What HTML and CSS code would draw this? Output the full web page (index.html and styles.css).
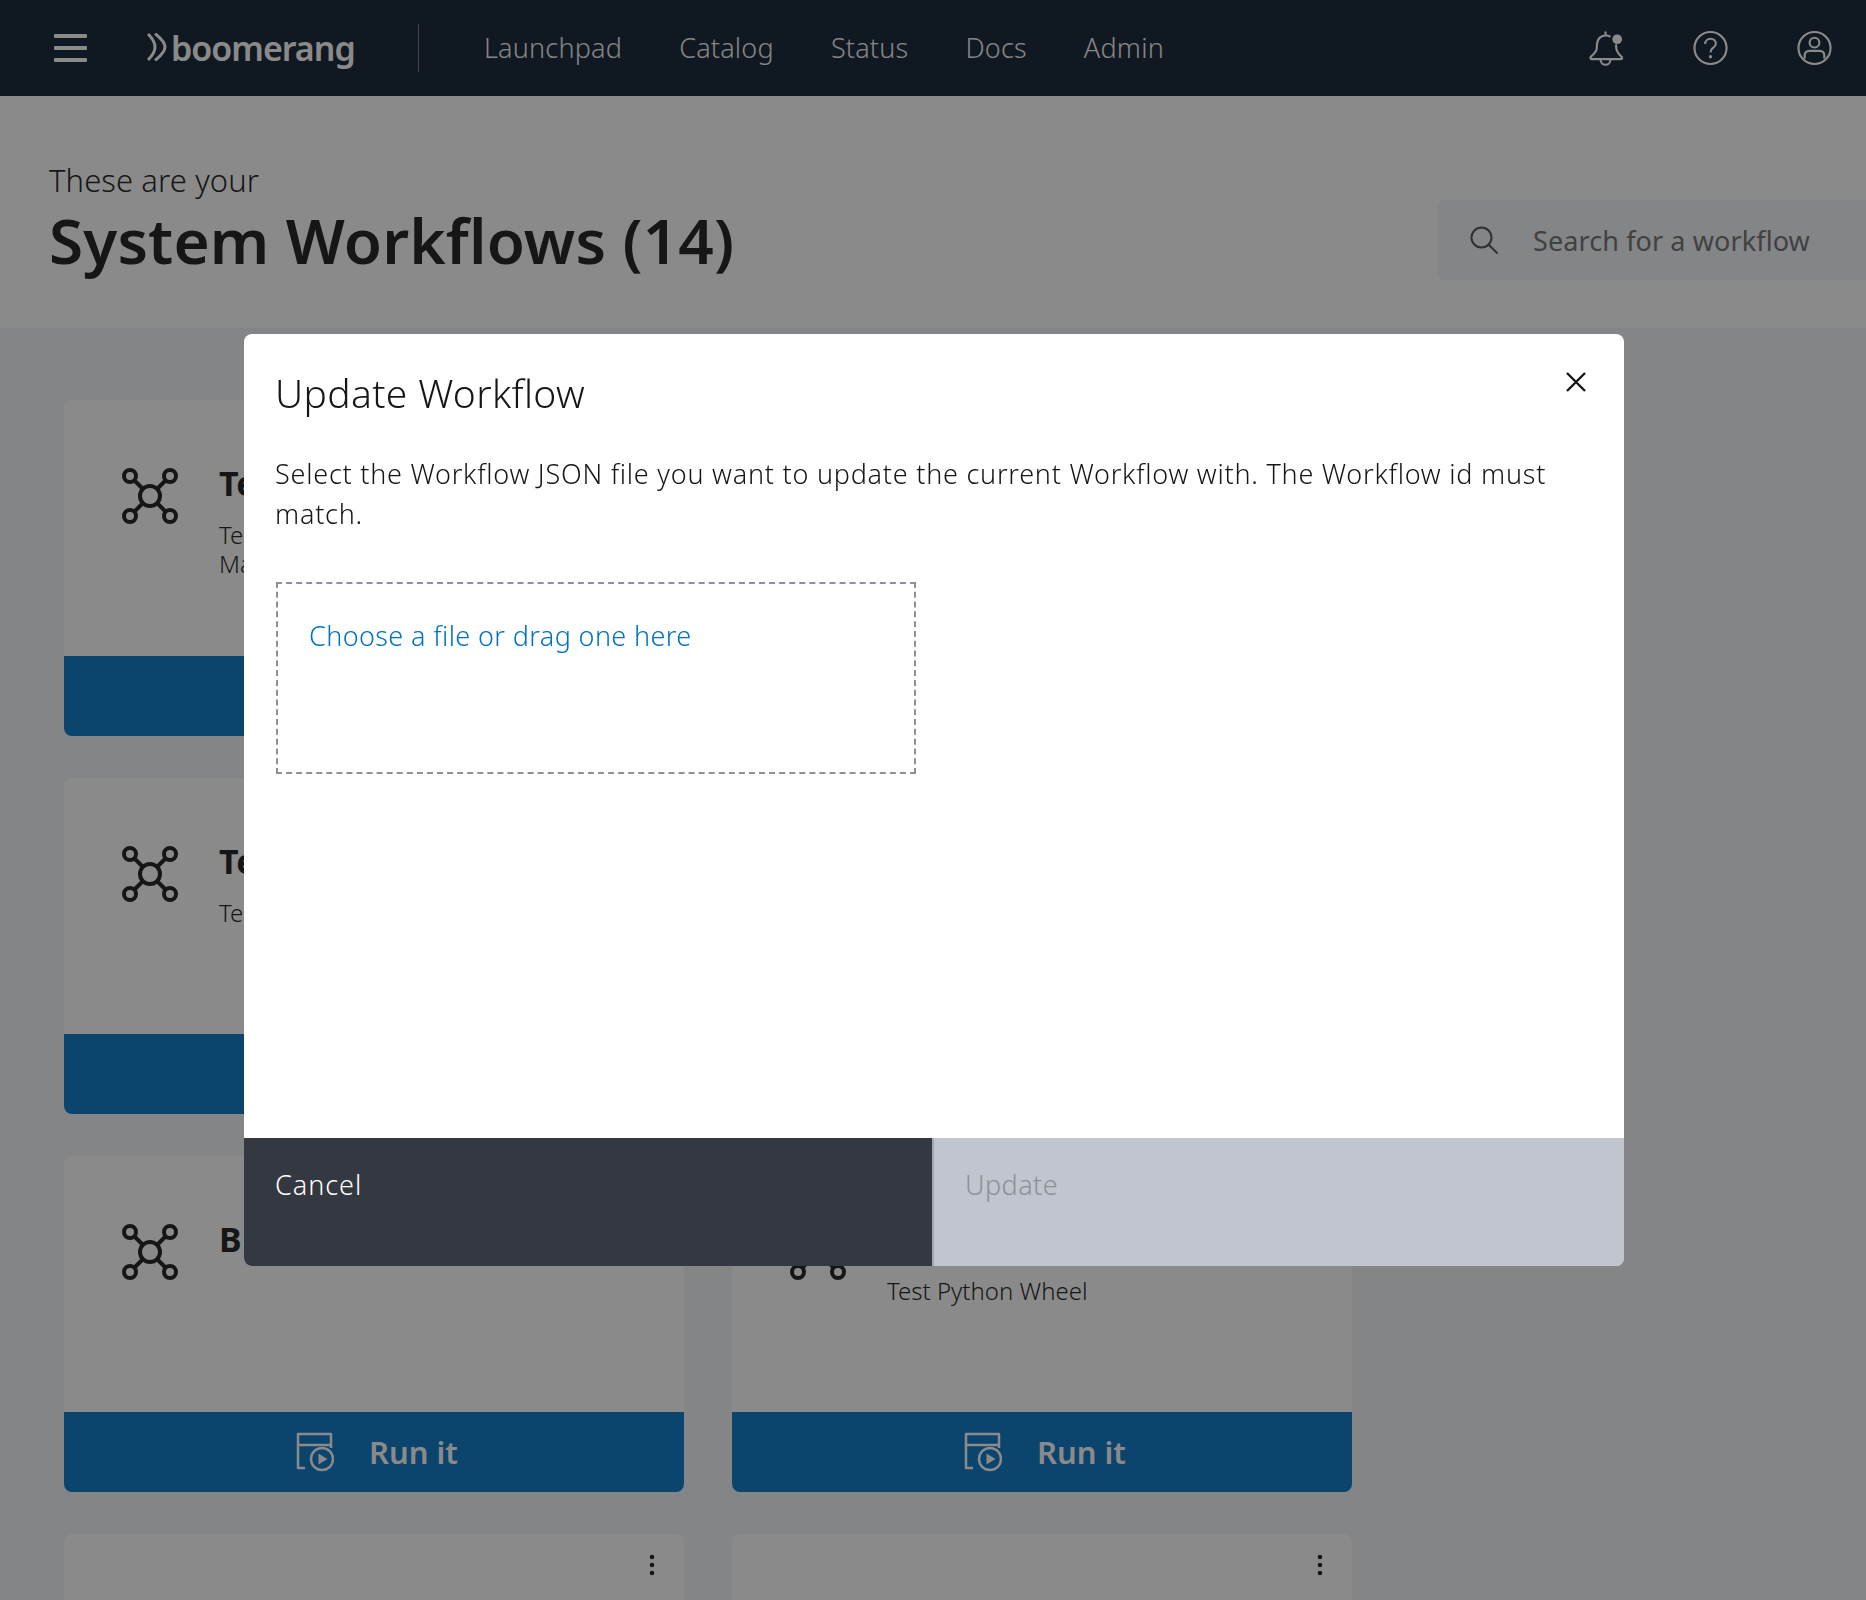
FILE: index.html
```html
<!DOCTYPE html>
<html lang="en">
<head>
<meta charset="utf-8">
<title>System Workflows</title>
<link rel="stylesheet" href="styles.css">
</head>
<body>
<svg class="defs" width="0" height="0" aria-hidden="true">
  <symbol id="wf" viewBox="0 0 56 56">
    <g fill="none" stroke="currentColor" stroke-width="4">
      <circle cx="28" cy="28" r="10"/>
      <circle cx="8" cy="8" r="6"/><circle cx="48" cy="8" r="6"/>
      <circle cx="8" cy="48" r="6"/><circle cx="48" cy="48" r="6"/>
      <path d="M12.5 12.5l8.5 8.5M43.500 12.500l-8.500 8.500M12.500 43.500l8.500-8.500M43.500 43.500l-8.500-8.500"/>
    </g>
  </symbol>
  <symbol id="run" viewBox="0 0 38 40">
    <g fill="none" stroke="currentColor" stroke-width="2.500" stroke-linejoin="round">
      <path d="M9 36H2V2h33v11H2"/>
      <path d="M35 13v3"/>
      <circle cx="26" cy="27" r="11"/>
    </g>
    <path d="M22.500 21.500l9 5.500-9 5.500z" fill="currentColor"/>
  </symbol>
  <symbol id="kebab" viewBox="0 0 6 22">
    <circle cx="3" cy="3" r="2.300" fill="currentColor"/><circle cx="3" cy="11" r="2.300" fill="currentColor"/><circle cx="3" cy="19" r="2.300" fill="currentColor"/>
  </symbol>
</svg>

<div class="page">
<header class="topbar">
  <button class="menu" aria-label="Menu"><span></span><span></span><span></span></button>
  <a class="logo">
    <svg class="logo-mark" viewBox="0 0 20 28"><g fill="none" stroke="currentColor" stroke-width="3"><path d="M1 1c4 4 7 8 7 13s-3 9-7 13"/><path d="M8 .5c5 4 10 8.500 10 13.500s-5 9.500-10 13.500"/></g></svg>
    <span>boomerang</span>
  </a>
  <span class="divider"></span>
  <nav class="links">
    <a>Launchpad</a><a>Catalog</a><a>Status</a><a>Docs</a><a>Admin</a>
  </nav>
  <div class="actions">
    <svg class="act bell" viewBox="0 0 36 36"><g fill="none" stroke="currentColor" stroke-width="2.200" stroke-linejoin="round"><path d="M17 1v4"/><path d="M22 6.500C20 5 14 4 10.500 8 8 11 8 14 8 18c0 4-3 6-6 9-1 1-.5 2.500 1 2.500h29.500c1.500 0 2-1.500 1-2.500-3-3-5.500-5-5.500-9.500 0-1 0-2-.5-3"/><path d="M12 30c0 7 10 7 10 0"/></g><circle cx="29" cy="9" r="5" fill="currentColor"/></svg>
    <svg class="act" viewBox="0 0 36 36"><g fill="none" stroke="currentColor" stroke-width="2.200"><circle cx="18" cy="18" r="16.500"/><path d="M12.500 14c0-3.500 2.500-5.500 5.500-5.500s5.500 2 5.500 5c0 2-1 3-3 4.500-2 1.300-2.500 2.300-2.500 4.500"/></g><circle cx="18" cy="27" r="1.700" fill="currentColor"/></svg>
    <svg class="act" viewBox="0 0 36 36"><g fill="none" stroke="currentColor" stroke-width="2.200"><circle cx="18" cy="18" r="16.500"/><circle cx="18" cy="12.500" r="5"/><path d="M8 29c-1-7 2-8 5-8h10c3 0 6 1 5 8"/></g></svg>
  </div>
</header>

<section class="hero">
  <div class="hero-text">
    <p class="eyebrow">These are your</p>
    <h1 class="title">System Workflows (14)</h1>
  </div>
  <label class="search">
    <svg class="search-icon" viewBox="0 0 28 28"><g fill="none" stroke="currentColor" stroke-width="2"><circle cx="11.500" cy="11.500" r="10"/><path d="M18.500 18.500l9 9"/></g></svg>
    <span>Search for a workflow</span>
  </label>
</section>

<main class="grid">
  <article class="card">
    <div class="card-body">
      <svg class="wf"><use href="#wf"/></svg>
      <div class="card-text"><h2>Te</h2><p>Te<br>Ma</p></div>
      <svg class="kebab"><use href="#kebab"/></svg>
    </div>
    <button class="run"><svg class="run-icon"><use href="#run"/></svg><span>Run it</span></button>
  </article>
  <article class="card">
    <div class="card-body">
      <svg class="wf"><use href="#wf"/></svg>
      <svg class="kebab"><use href="#kebab"/></svg>
    </div>
    <button class="run"><svg class="run-icon"><use href="#run"/></svg></button>
  </article>
  <article class="card">
    <div class="card-body">
      <svg class="wf"><use href="#wf"/></svg>
      <div class="card-text"><h2>Te</h2><p>Te</p></div>
      <svg class="kebab"><use href="#kebab"/></svg>
    </div>
    <button class="run"><svg class="run-icon"><use href="#run"/></svg><span>Run it</span></button>
  </article>
  <article class="card">
    <div class="card-body">
      <svg class="wf"><use href="#wf"/></svg>
      <svg class="kebab"><use href="#kebab"/></svg>
    </div>
    <button class="run"><svg class="run-icon"><use href="#run"/></svg></button>
  </article>
  <article class="card">
    <div class="card-body">
      <svg class="wf"><use href="#wf"/></svg>
      <div class="card-text"><h2>B</h2></div>
      <svg class="kebab"><use href="#kebab"/></svg>
    </div>
    <button class="run"><svg class="run-icon"><use href="#run"/></svg><span>Run it</span></button>
  </article>
  <article class="card">
    <div class="card-body">
      <svg class="wf"><use href="#wf"/></svg>
      <div class="card-text"><h2>Python Wheel</h2><p>Test Python Wheel</p></div>
      <svg class="kebab"><use href="#kebab"/></svg>
    </div>
    <button class="run"><svg class="run-icon"><use href="#run"/></svg><span>Run it</span></button>
  </article>
  <article class="card">
    <div class="card-body"><svg class="kebab"><use href="#kebab"/></svg></div>
  </article>
  <article class="card">
    <div class="card-body"><svg class="kebab"><use href="#kebab"/></svg></div>
  </article>
</main>
</div>

<div class="overlay">
  <div class="modal" role="dialog">
    <div class="modal-main">
      <h3 class="modal-title">Update Workflow</h3>
      <button class="close" aria-label="Close"><svg viewBox="0 0 20 20"><path d="M1 1l18 18M19 1L1 19" fill="none" stroke="currentColor" stroke-width="2.400"/></svg></button>
      <p class="modal-copy">Select the Workflow JSON file you want to update the current Workflow with. The Workflow id must match.</p>
      <div class="drop"><a>Choose a file or drag one here</a></div>
    </div>
    <div class="modal-foot">
      <button class="btn cancel">Cancel</button>
      <button class="btn update" disabled>Update</button>
    </div>
  </div>
</div>
</body>
</html>
```
FILE: styles.css
```css
* { box-sizing: border-box; }
html, body { margin: 0; height: 100%; overflow: hidden; }
body { background: #f2f4f8; font-family: "Noto Sans", "Open Sans", sans-serif; color: #161616; }
.defs { position: absolute; }
button { font: inherit; border: 0; background: none; padding: 0; }
h1, h2, h3, p { margin: 0; font-weight: 400; }
.page { height: 1600px; display: flex; flex-direction: column; overflow: hidden; }

.topbar { flex: none; height: 96px; background: #0a1a2c; color: #fff; display: flex; align-items: center; }
.menu { width: 33px; margin-left: 54px; display: flex; flex-direction: column; gap: 8px; }
.menu span { display: block; height: 4px; border-radius: 1px; background: #fff; }
.logo { display: flex; align-items: center; gap: 4px; margin-left: 60px; width: 271px; font-size: 34px; font-weight: 600; letter-spacing: -1px; }
.logo-mark { flex: none; width: 20px; height: 28px; margin-top: -2px; }
.divider { flex: none; width: 1px; height: 48px; background: #6a7075; }
.links { display: flex; gap: 57px; margin: -2px 0 0 65px; font-size: 27px; letter-spacing: .2px; color: #f4f4f4; font-weight: 300; }
.actions { margin-left: auto; display: flex; gap: 69px; margin-right: 34px; }
.act { width: 35px; height: 36px; color: #fff; }

.hero { flex: none; height: 232px; background: #fff; display: flex; align-items: flex-start; justify-content: space-between; padding: 64px 0 0 49px; }
.eyebrow { font-size: 31px; line-height: 40px; font-weight: 300; letter-spacing: .1px; }
.title { font-size: 62px; line-height: 80px; font-weight: 600; letter-spacing: .15px; }
.search { flex: 0 0 480px; height: 80px; margin: 40px -51px 0 0; background: #f2f4f8; border-radius: 8px; display: flex; align-items: center; gap: 35px; padding-left: 33px; font-size: 27px; letter-spacing: .1px; color: #6c6c6c; }
.search-icon { width: 28px; height: 28px; color: #4a4a4a; }

.grid { flex: 1; overflow: hidden; display: grid; grid-template-columns: 620px 620px; grid-auto-rows: 336px; gap: 42px 48px; padding: 72px 64px; }
.card { background: #fff; border-radius: 8px; display: flex; flex-direction: column; }
.card-body { position: relative; flex: 1; display: flex; gap: 41px; padding: 68px 58px 0; }
.wf { flex: none; width: 56px; height: 56px; }
.card-text h2 { font-size: 34px; line-height: 30px; font-weight: 700; }
.card-text p { margin-top: 22px; font-size: 24px; line-height: 29px; font-weight: 300; }
.kebab { position: absolute; top: 20px; right: 29px; width: 6px; height: 22px; }
.run { flex: none; height: 80px; background: #0072c3; color: #fff; border-radius: 0 0 8px 8px; display: flex; align-items: center; justify-content: center; gap: 35px; padding-left: 6px; font-size: 31px; font-weight: 600; }
.run-icon { width: 38px; height: 40px; }

.overlay { position: fixed; inset: 0; background: rgba(22,22,22,.5); display: flex; align-items: center; justify-content: center; }
.modal { width: 1380px; height: 932px; margin-left: 2px; background: #fff; border-radius: 8px; display: flex; flex-direction: column; overflow: hidden; }
.modal-main { position: relative; flex: 1; padding: 35px 32px 0 31px; }
.modal-title { font-size: 39px; line-height: 48px; font-weight: 300; letter-spacing: .35px; }
.close { position: absolute; top: 38px; right: 38px; width: 20px; height: 20px; color: #161616; display: flex; }
.close svg { width: 20px; height: 20px; }
.modal-copy { margin-top: 37px; font-size: 27px; line-height: 40px; font-weight: 300; letter-spacing: .76px; }
.drop { margin: 48px 0 0 1px; width: 640px; height: 192px; border: 2px dashed #8d909a; padding: 32px 31px; font-size: 27px; line-height: 40px; letter-spacing: .38px; color: #0072c3; font-weight: 300; }
.modal-foot { flex: none; height: 128px; display: flex; background: #a4a7ae; gap: 2px; }
.btn { display: flex; align-items: flex-start; padding: 27px 31px 0; font-size: 27px; line-height: 40px; font-weight: 300; }
.cancel { flex: 0 0 688px; background: #343841; color: #fff; letter-spacing: .95px; }
.update { flex: 1; background: #c1c5ce; color: #8d9098; letter-spacing: .45px; }
```
